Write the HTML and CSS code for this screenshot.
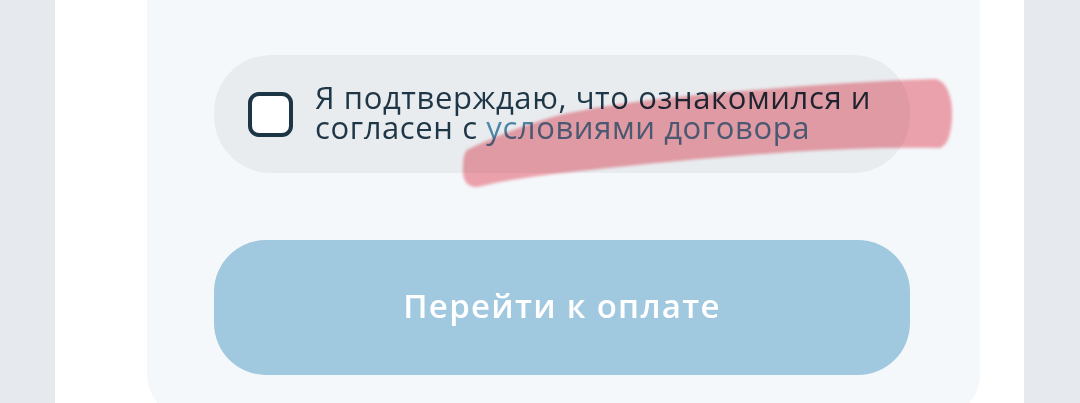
FILE: index.html
```html
<!DOCTYPE html>
<html lang="ru">
<head>
<meta charset="utf-8">
<title>Оплата</title>
<link rel="stylesheet" href="styles.css">
</head>
<body>
<div class="screen">
  <div class="side"></div>
  <div class="panel">
    <div class="card">
      <label class="agree">
        <span class="box"></span>
        <span class="agree-text">Я подтверждаю, что ознакомился и<br>согласен с <a class="link" href="#">условиями договора</a></span>
      </label>
      <button class="pay" type="button">Перейти к оплате</button>
    </div>
  </div>
  <div class="side side-right"></div>
</div>
<svg class="scribble" width="1080" height="403" viewBox="0 0 1080 403" aria-hidden="true">
  <defs>
    <filter id="soft" x="-5%" y="-20%" width="110%" height="140%">
      <feGaussianBlur stdDeviation="1.4"/>
    </filter>
  </defs>
  <path filter="url(#soft)" fill="#f6a6ae" d="M467 150 C490 139 520 126 560 115 C600 106 650 99 720 93 C790 87 860 81 935 79 C948 81 953 100 952 118 C951 134 948 145 940 148 C890 147 840 149 790 152 C720 157 650 163 590 170 C540 175 500 181 478 187 C466 188 462 178 463 168 C463 159 464 153 467 150 Z"/>
</svg>
</body>
</html>
```

FILE: styles.css
```css
html, body {
  margin: 0;
  padding: 0;
}

body {
  width: 1080px;
  height: 403px;
  overflow: hidden;
  position: relative;
  background: #e6eaee;
  font-family: "Open Sans", "Noto Sans", sans-serif;
}

.screen {
  display: flex;
  height: 403px;
}

.side {
  width: 55px;
  flex: none;
  background: #e6eaee;
}

.side-right {
  width: 56px;
}

.panel {
  flex: 1;
  background: #ffffff;
  padding-left: 92px;
}

.card {
  width: 833px;
  height: 420px;
  background: #f4f8fb;
  border-radius: 0 0 46px 46px;
  box-sizing: border-box;
  padding: 55px 70px 0 67px;
  display: flex;
  flex-direction: column;
  gap: 67px;
}

.agree {
  display: flex;
  align-items: center;
  gap: 23px;
  height: 118px;
  box-sizing: border-box;
  padding-left: 34px;
  background: #e8ecef;
  border-radius: 57px;
}

.box {
  width: 45px;
  height: 45px;
  flex: none;
  box-sizing: border-box;
  border: 4px solid #1d3646;
  border-radius: 11px;
  background: #ffffff;
}

.agree-text {
  font-size: 31px;
  line-height: 30px;
  letter-spacing: 0.6px;
  color: #1e3646;
  margin-top: -4px;
  margin-left: -1px;
}

.link {
  color: #4e87a6;
  text-decoration: none;
}

.pay {
  height: 135px;
  border: 0;
  border-radius: 52px;
  background: #a0c8de;
  color: #ffffff;
  font-family: "Open Sans", "Noto Sans", sans-serif;
  font-size: 33px;
  font-weight: 600;
  letter-spacing: 1.3px;
  padding: 0 0 4px;
}

.scribble {
  position: absolute;
  left: 0;
  top: 0;
  pointer-events: none;
  mix-blend-mode: multiply;
}
```
